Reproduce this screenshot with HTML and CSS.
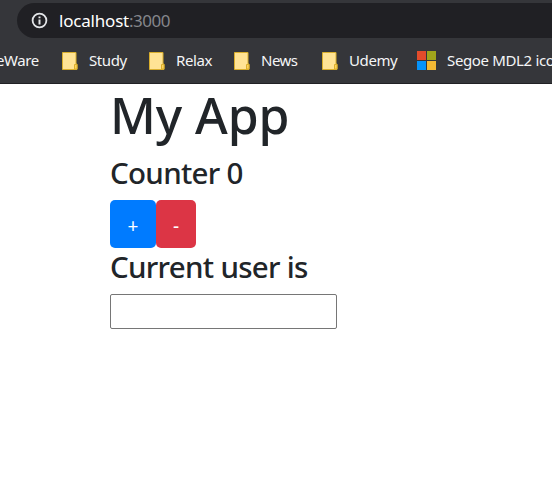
FILE: index.html
```
<!DOCTYPE html>
<html lang="en">
<head>
<meta charset="utf-8">
<title>My App</title>
<link rel="stylesheet" href="styles.css">
</head>
<body>
<svg class="defs" width="0" height="0" aria-hidden="true">
  <symbol id="folder" viewBox="0 0 16 18">
    <path d="M.5.5h13.500v11.500h1v5.500H.5z" fill="#ffe394" stroke="#d9ae2c"/>
    <path d="M12.500 17v-4.500h2.500V17z" fill="#ffd35c" stroke="#d9ae2c"/>
  </symbol>
</svg>
<header class="browser">
  <div class="address">
    <svg class="info" viewBox="0 0 18 18"><circle cx="9" cy="9" r="7.300" fill="none" stroke="#e4e6e9" stroke-width="1.900"/><path d="M9 4.700v1.900M9 7.900v5.400" stroke="#e4e6e9" stroke-width="2.100"/></svg>
    <span class="url"><span class="host">localhost</span><span class="port">:3000</span></span>
  </div>
  <nav class="bookmarks">
    <span class="bookmark ware"><span>eWare</span></span>
    <span class="bookmark study"><svg class="folder"><use href="#folder"/></svg><span>Study</span></span>
    <span class="bookmark relax"><svg class="folder"><use href="#folder"/></svg><span>Relax</span></span>
    <span class="bookmark news"><svg class="folder"><use href="#folder"/></svg><span>News</span></span>
    <span class="bookmark udemy"><svg class="folder"><use href="#folder"/></svg><span>Udemy</span></span>
    <span class="bookmark segoe"><svg class="windows" viewBox="0 0 19 19"><path fill="#e34c2b" d="M0 0h9v9H0z"/><path fill="#a0a51b" d="M10 0h9v9h-9z"/><path fill="#0593fa" d="M0 10h9v9H0z"/><path fill="#f2b934" d="M10 10h9v9h-9z"/></svg><span>Segoe MDL2 icons</span></span>
  </nav>
</header>
<main class="container">
  <h1>My App</h1>
  <h4 class="counter">Counter 0</h4>
  <div class="buttons"><button class="btn primary">+</button><button class="btn danger">-</button></div>
  <h4 class="user">Current user is</h4>
  <input type="text" aria-label="User name">
</main>
</body>
</html>
```
FILE: styles.css
```
* { box-sizing: border-box; }
body {
  margin: 0;
  background: #fff;
  color: #212529;
  font-family: "Noto Sans", "Open Sans", sans-serif;
  overflow: hidden;
}
.defs { display: block; }
.browser {
  height: 84px;
  padding-top: 3px;
  overflow: hidden;
  background: #35363a;
  border-bottom: 1px solid #202124;
}
.address {
  display: flex;
  align-items: center;
  height: 35px;
  margin-left: 17px;
  padding-left: 14px;
  background: #202024;
  border-radius: 18px 0 0 18px;
}
.info { width: 17px; height: 17px; margin-right: 11px; }
.url { font-size: 17px; line-height: 24px; white-space: nowrap; }
.host { color: #fff; letter-spacing: -0.2px; }
.port { color: #85868b; letter-spacing: -0.5px; }
.bookmarks {
  display: flex;
  height: 45px;
  white-space: nowrap;
  color: #f4f5f6;
  font-size: 15px;
  letter-spacing: -0.4px;
}
.bookmark { display: flex; flex: none; align-items: center; }
.bookmark > span { margin-top: -2px; }
.ware { width: 64px; margin-left: -4px; }
.study { width: 87px; margin-left: 2px; }
.relax { width: 85px; }
.news { width: 88px; letter-spacing: -0.5px; }
.udemy { width: 95px; }
.segoe { letter-spacing: -0.35px; }
.folder { width: 16px; height: 18px; margin-right: 11px; }
.windows { width: 19px; height: 19px; margin-right: 11px; }
.container { padding-left: 110px; }
h1, h4 { margin: 0; font-weight: 500; white-space: nowrap; }
h1 { height: 70px; font-size: 50px; line-height: 62px; letter-spacing: -0.1px; }
h4 { font-size: 29.5px; line-height: 36px; letter-spacing: -0.7px; }
.counter { height: 46px; padding-top: 1px; }
.buttons { display: flex; height: 48px; }
.btn {
  border: 0;
  border-radius: 5px;
  padding: 4px 0 0;
  color: #fff;
  font: 19px/30px "Noto Sans", sans-serif;
}
.primary { width: 46px; background: #007bff; }
.danger { width: 40px; background: #dc3545; }
.user { height: 46px; padding-top: 1px; }
input {
  display: block;
  width: 227px;
  height: 35px;
  border: 1px solid #767676;
  border-radius: 2px;
  background: #fff;
}
```
